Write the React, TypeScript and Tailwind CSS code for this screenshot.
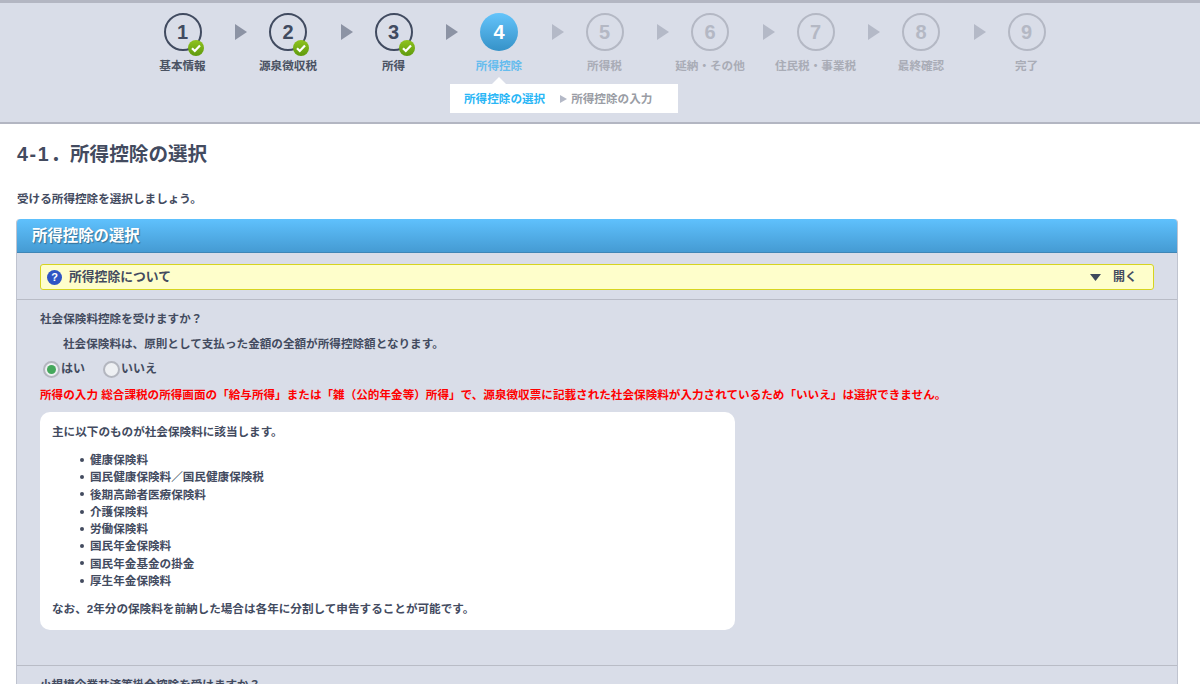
import React from "react";

const font = { fontFamily: '"Liberation Sans", "Noto Sans CJK JP", sans-serif' };

const steps = [
  { n: 1, label: "基本情報", state: "done" },
  { n: 2, label: "源泉徴収税", state: "done" },
  { n: 3, label: "所得", state: "done" },
  { n: 4, label: "所得控除", state: "current" },
  { n: 5, label: "所得税", state: "todo" },
  { n: 6, label: "延納・その他", state: "todo" },
  { n: 7, label: "住民税・事業税", state: "todo" },
  { n: 8, label: "最終確認", state: "todo" },
  { n: 9, label: "完了", state: "todo" },
];

const list = ["健康保険料", "国民健康保険料／国民健康保険税", "後期高齢者医療保険料", "介護保険料", "労働保険料", "国民年金保険料", "国民年金基金の掛金", "厚生年金保険料"];

function Check() {
  return (
    <span className="absolute left-[22px] top-[25px] w-[16px] h-[16px] rounded-full bg-gradient-to-b from-[#8fc31f] to-[#5f9a0c] flex items-center justify-center">
      <svg width="12" height="10" viewBox="0 0 12 10">
        <path d="M2 5.2 L4.8 8 L10 2.4" fill="none" stroke="#fff" strokeWidth="2.2" />
      </svg>
    </span>
  );
}

function Step({ n, label, state }: { n: number; label: string; state: string }) {
  const circle =
    state === "current"
      ? "bg-gradient-to-b from-[#64c4fb] to-[#3592c8] text-white"
      : state === "done"
      ? "border-2 border-[#414b60] text-[#414b60]"
      : "border-2 border-[#b4b8c4] text-[#b4b8c4]";
  const text = state === "current" ? "text-[#65bcee]" : state === "done" ? "text-[#4a5262]" : "text-[#a9acb6]";
  return (
    <div className="w-[76px] shrink-0 flex flex-col items-center">
      <div className={`relative w-[38px] h-[38px] rounded-full flex items-center justify-center text-[20px] font-bold ${circle}`}>
        {n}
        {state === "done" && <Check />}
      </div>
      <div className={`mt-[6px] text-[11.6px] leading-[18px] font-bold whitespace-nowrap ${text}`}>{label}</div>
    </div>
  );
}

function Arrow({ light }: { light: boolean }) {
  return (
    <div className="w-[29.5px] shrink-0 h-[38px] flex items-center justify-center pl-[12px]">
      <svg width="12" height="16" viewBox="0 0 12 16" className="shrink-0">
        <path d="M0 0 L12 8 L0 16 Z" fill={light ? "#b4b9c7" : "#8c93a4"} />
      </svg>
    </div>
  );
}

function Radio({ on }: { on: boolean }) {
  return (
    <span className="w-[17px] h-[17px] rounded-full border-2 border-[#b3b6bf] bg-[#eef0f3] flex items-center justify-center shrink-0">
      {on && <span className="w-[9px] h-[9px] rounded-full bg-[#45a85c]" />}
    </span>
  );
}

export default function App() {
  return (
    <div style={font} className="w-[1200px] h-[684px] overflow-hidden bg-white text-[11.6px] font-bold text-[#434b5f]">
      <header className="h-[124px] bg-[#d9dde8] border-t-[3px] border-[#b3b6c2] border-b-[2px] border-b-[#b3b6c2] flex flex-col items-center">
        <div className="flex pt-[10px] pl-[9px]">
          {steps.map((s, i) => (
            <React.Fragment key={s.n}>
              <Step {...s} />
              {i < steps.length - 1 && <Arrow light={i >= 3} />}
            </React.Fragment>
          ))}
        </div>
        <div className="relative self-start ml-[450px] mt-[9px] w-[228px] h-[29px] bg-white flex items-center pl-[14px]">
          <span className="absolute left-[42px] top-[-7px] w-0 h-0 border-x-[7px] border-x-transparent border-b-[7px] border-b-white" />
          <span className="text-[#29b6f6]">所得控除の選択</span>
          <svg className="ml-[15px] mr-[4px]" width="7" height="8" viewBox="0 0 7 8"><path d="M0 0 L7 4 L0 8 Z" fill="#b4b9c7" /></svg>
          <span className="text-[#9a9da5]">所得控除の入力</span>
        </div>
      </header>

      <main className="px-[16px]">
        <h1 className="pt-[18px] text-[19.6px] leading-[25px] font-bold text-[#434b5f] pl-[1px]">
          <span className="tracking-[1.7px]">4-1</span>．所得控除の選択
        </h1>
        <p className="mt-[23px] leading-[18px] pl-[1px]">受ける所得控除を選択しましょう。</p>
        <section className="mt-[11px] w-[1162px] bg-[#d9dde8] border-x border-[#bfc3cf] rounded-t-[4px]">
          <h2 className="h-[34px] rounded-t-[4px] bg-gradient-to-b from-[#5fc1fd] to-[#459bd3] border-b border-[#3f86b6] text-white text-[15.4px] leading-[33px] pl-[15px] [text-shadow:1px_1px_1px_rgba(0,0,0,0.35)]">
            所得控除の選択
          </h2>
          <div className="px-[23px] pt-[11px] pb-[9px] border-b border-[#b9bcc6]">
            <div className="h-[26px] rounded-[3px] border border-[#d6d420] bg-[#fefecb] flex items-center pl-[6px] pr-[16px]">
              <span className="w-[15px] h-[15px] rounded-full bg-[#2f55c4] text-white text-[11px] leading-[15px] text-center">?</span>
              <span className="ml-[7px] text-[12.8px]">所得控除について</span>
              <svg className="ml-auto mr-[12px]" width="11" height="7" viewBox="0 0 11 7"><path d="M0 0 H11 L5.5 7 Z" fill="#3f4a5c" /></svg>
              <span className="text-[12px]">開く</span>
            </div>
          </div>
          <div className="px-[23px] pt-[9px] pb-[35px] border-b border-[#b9bcc6]">
            <p className="leading-[20px]">社会保険料控除を受けますか？</p>
            <p className="mt-[5px] pl-[23px] leading-[20px]">社会保険料は、原則として支払った金額の全額が所得控除額となります。</p>
            <div className="mt-[6px] flex items-center h-[18px] pl-[3px]">
              <Radio on />
              <span className="ml-[1px] text-[12px]">はい</span>
              <span className="ml-[18px]"><Radio on={false} /></span>
              <span className="ml-[1px] text-[12px]">いいえ</span>
            </div>
            <p className="mt-[8px] leading-[18px] text-[#ff0000] whitespace-nowrap">
              所得の入力 総合課税の所得画面の「給与所得」または「雑（公的年金等）所得」で、源泉徴収票に記載された社会保険料が入力されているため「いいえ」は選択できません。
            </p>
            <div className="mt-[8px] w-[695px] h-[218px] bg-white rounded-[10px] px-[12px] pt-[11px]">
              <p className="leading-[18px]">主に以下のものが社会保険料に該当します。</p>
              <ul className="mt-[10px] pl-[28px] leading-[17.3px]">
                {list.map((t) => (
                  <li key={t} className="flex items-center">
                    <span className="w-[4px] h-[4px] rounded-full bg-[#434b5f] mr-[6px]" />
                    {t}
                  </li>
                ))}
              </ul>
              <p className="mt-[11px] leading-[18px]">なお、2年分の保険料を前納した場合は各年に分割して申告することが可能です。</p>
            </div>
          </div>
          <p className="px-[23px] pt-[9px] leading-[20px]">小規模企業共済等掛金控除を受けますか？</p>
        </section>
      </main>
    </div>
  );
}
